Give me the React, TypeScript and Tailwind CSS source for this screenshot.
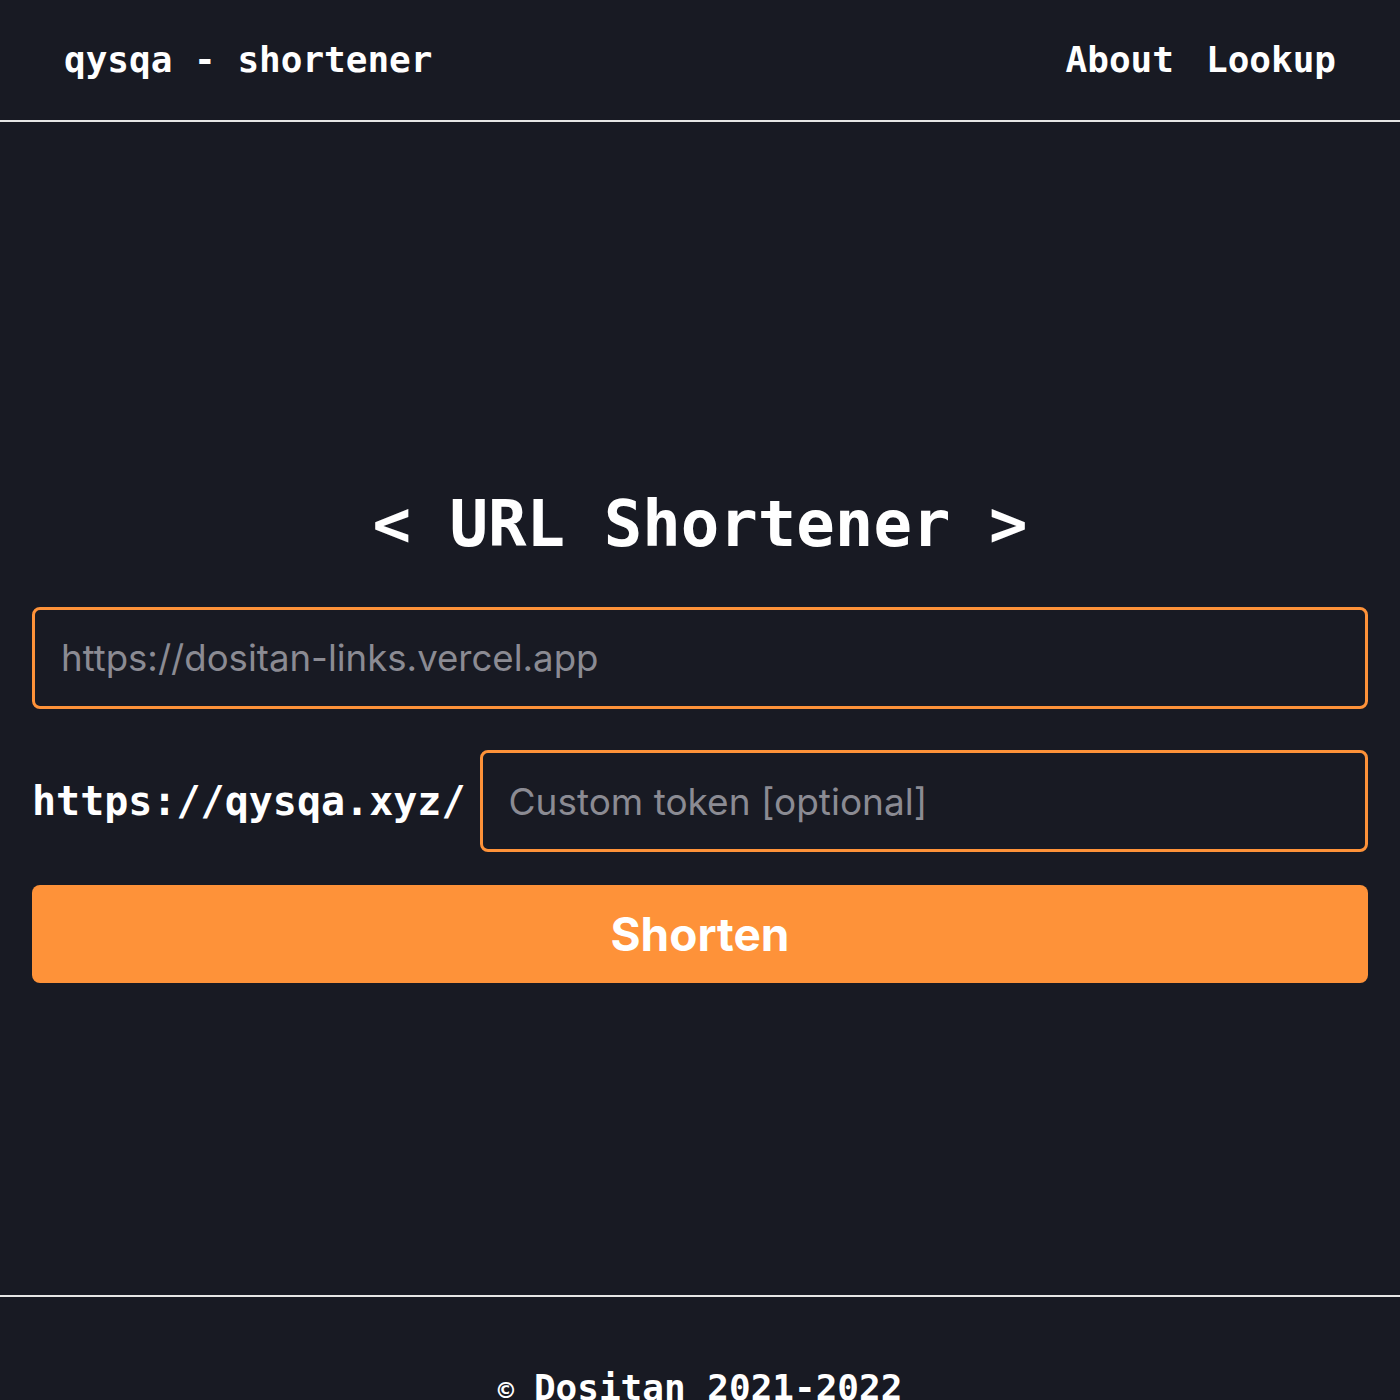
import React from "react";

const mono = { fontFamily: '"DejaVu Sans Mono", "Liberation Mono", monospace' };
const sans = { fontFamily: 'Inter, "Noto Sans", "Liberation Sans", sans-serif' };

export default function App() {
  return (
    <div className="min-h-screen w-full bg-[#181a23] text-white flex flex-col">
      <header className="h-[122px] flex items-center justify-between px-16 border-b-2 border-[#e5e5e5]" style={mono}>
        <div className="text-[36px] font-bold">qysqa - shortener</div>
        <nav className="flex items-center gap-[32px] text-[36px] font-bold">
          <a>About</a>
          <a>Lookup</a>
        </nav>
      </header>
      <main className="h-[1173px] flex flex-col justify-center px-8 pt-[58px]">
        <h1 className="text-[64px] leading-none font-bold text-center mb-[51px]" style={mono}>
          &lt; URL Shortener &gt;
        </h1>
        <input
          className="h-[102px] w-full rounded-lg border-[3px] border-[#fe9239] bg-transparent pl-[26px] pr-7 text-[36.6px] text-white outline-none placeholder:text-[#8b8b93]"
          style={sans}
          placeholder="https://dositan-links.vercel.app"
        />
        <div className="flex items-center gap-[15px] mt-[41px]">
          <span className="text-[40px] font-bold whitespace-nowrap" style={mono}>
            https://qysqa.xyz/
          </span>
          <input
            className="h-[102px] flex-1 min-w-0 rounded-lg border-[3px] border-[#fe9239] bg-transparent pl-[25px] pr-7 text-[37px] text-white outline-none placeholder:text-[#8b8b93]"
            style={sans}
            placeholder="Custom token [optional]"
          />
        </div>
        <button
          className="mt-[33px] h-[98px] w-full rounded-lg bg-[#fe9239] text-white text-[46px] font-bold"
          style={sans}
        >
          Shorten
        </button>
      </main>
      <footer className="border-t-2 border-[#e5e5e5] py-16 text-center" style={mono}>
        <span className="text-[27px] font-bold mr-[20px]">©</span>
        <span className="text-[36px] font-bold">Dositan 2021-2022</span>
      </footer>
    </div>
  );
}
